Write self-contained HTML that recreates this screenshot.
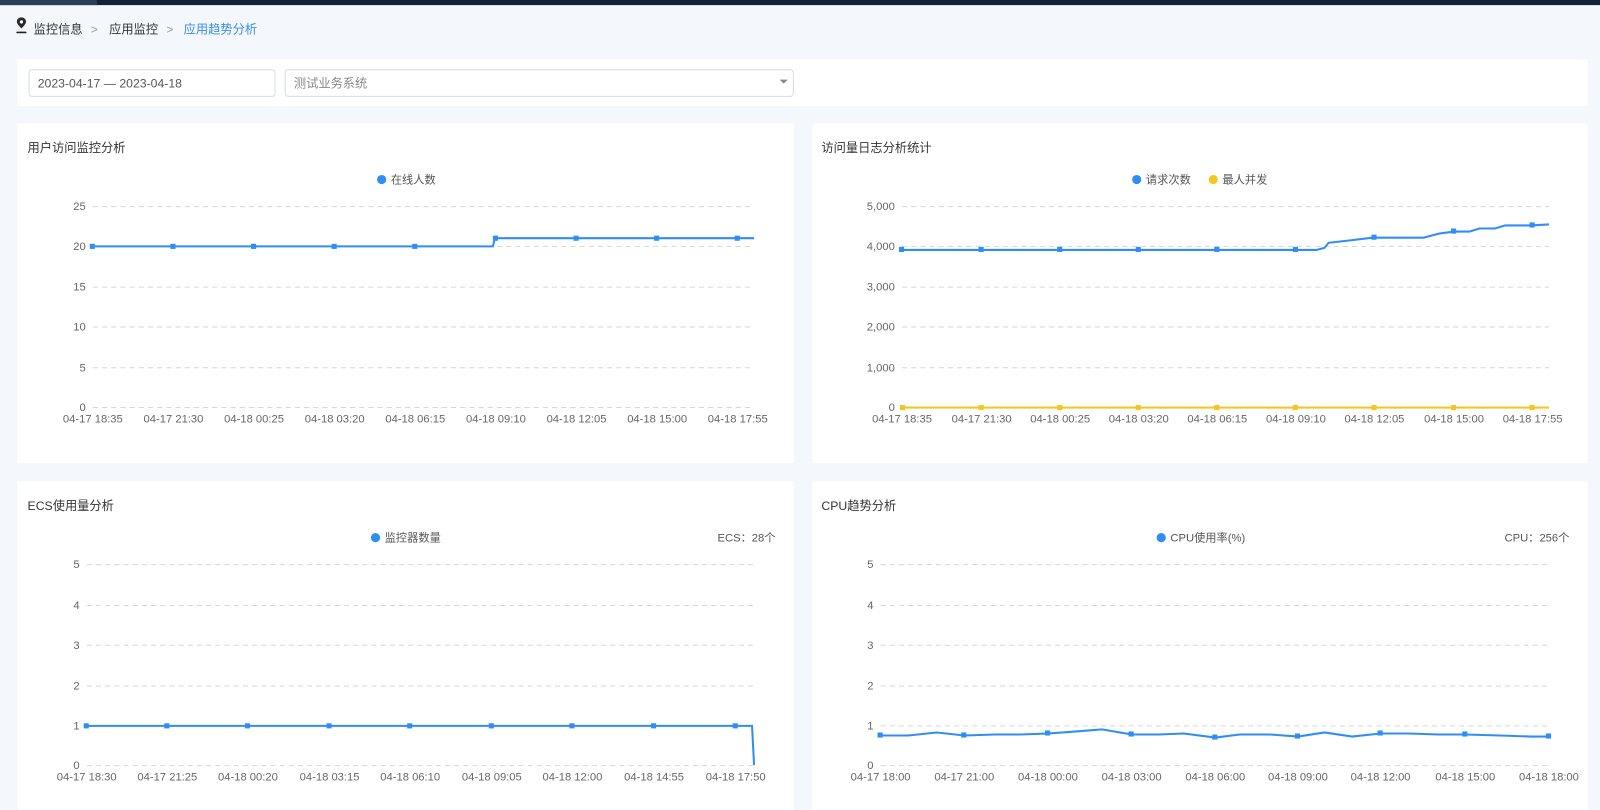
<!DOCTYPE html>
<html><head><meta charset="utf-8"><style>
html,body{margin:0;padding:0;width:1600px;height:810px;overflow:hidden;background:#f4f7fb;font-family:"Liberation Sans","Noto Sans CJK SC",sans-serif}
svg{display:block}
svg text{font-family:"Liberation Sans","Noto Sans CJK SC",sans-serif}
</style></head><body>
<svg width="1600" height="810" viewBox="0 0 1568 794" preserveAspectRatio="none" xmlns="http://www.w3.org/2000/svg">
<rect x="0" y="0" width="1568" height="794" fill="#f4f7fb"/>
<rect x="0" y="0" width="1568" height="5" fill="#13243a"/>
<rect x="0" y="0" width="95" height="5" fill="#2c3e55"/>
<g fill="#222">
<path d="M21 17c-2.8 0-4.5 2-4.5 4.3 0 2.6 4.5 6.5 4.5 6.5s4.5-3.9 4.5-6.5C25.5 19 23.8 17 21 17z" fill="#2a2a2a"/>
<circle cx="21" cy="21.5" r="1.6" fill="#fff"/>
<rect x="16" y="31" width="10" height="1.6" rx="0.8"/>
</g>
<text x="33" y="33" font-size="12" fill="#333">监控信息</text>
<text x="89" y="33" font-size="12" fill="#999">&gt;</text>
<text x="107" y="33" font-size="12" fill="#333">应用监控</text>
<text x="163" y="33" font-size="12" fill="#999">&gt;</text>
<text x="180" y="33" font-size="12" fill="#3a8ee6">应用趋势分析</text>
<rect x="17" y="58" width="1539" height="46" fill="#fff"/>
<rect x="28.5" y="68.5" width="241" height="26" rx="3" fill="#fff" stroke="#d5dbe0"/>
<text x="37" y="86" font-size="12" fill="#555">2023-04-17  —  2023-04-18</text>
<rect x="279.5" y="68.5" width="498" height="26" rx="3" fill="#fff" stroke="#d5dbe0"/>
<text x="288" y="86" font-size="12" fill="#888">测试业务系统</text>
<path d="M764 78l4 4 4-4z" fill="#888"/>
<rect x="17" y="121" width="761" height="333" fill="#fff"/>
<rect x="796" y="121" width="760" height="333" fill="#fff"/>
<rect x="17" y="472" width="761" height="330" fill="#fff"/>
<rect x="796" y="472" width="760" height="330" fill="#fff"/>
<g font-size="12" fill="#333">
<text x="27" y="149">用户访问监控分析</text>
<text x="805" y="149">访问量日志分析统计</text>
<text x="27" y="500">ECS使用量分析</text>
<text x="805" y="500">CPU趋势分析</text>
</g>
<g font-size="11" fill="#555">
<circle cx="374" cy="176" r="4.5" fill="#2f8ef5"/><text x="383" y="180">在线人数</text>
<circle cx="1114" cy="176" r="4.5" fill="#2f8ef5"/><text x="1123" y="180">请求次数</text>
<circle cx="1189" cy="176" r="4.5" fill="#f3c623"/><text x="1198" y="180">最人并发</text>
<circle cx="368" cy="527" r="4.5" fill="#2f8ef5"/><text x="377" y="531">监控器数量</text>
<circle cx="1138" cy="527" r="4.5" fill="#2f8ef5"/><text x="1147" y="531">CPU使用率(%)</text>
<text x="760" y="531" text-anchor="end">ECS：28个</text>
<text x="1538" y="531" text-anchor="end">CPU：256个</text>
</g>
<g stroke="#d6d6d6" stroke-dasharray="5 4" stroke-width="1">
<path d="M91 202.5H739M91 241.5H739M91 281.5H739M91 320.5H739M91 360.5H739M91 399.5H739"/>
<path d="M884 202.5H1518M884 241.5H1518M884 281.5H1518M884 320.5H1518M884 360.5H1518M884 399.5H1518"/>
<path d="M85 553.5H739M85 593.5H739M85 632.5H739M85 672.5H739M85 711.5H739M85 750.5H739"/>
<path d="M863 553.5H1518M863 593.5H1518M863 632.5H1518M863 672.5H1518M863 711.5H1518M863 750.5H1518"/>
</g>
<g font-size="11" fill="#666" text-anchor="end">
<text x="84" y="206">25</text><text x="84" y="245">20</text><text x="84" y="285">15</text><text x="84" y="324">10</text><text x="84" y="364">5</text><text x="84" y="403">0</text>
<text x="877" y="206">5,000</text><text x="877" y="245">4,000</text><text x="877" y="285">3,000</text><text x="877" y="324">2,000</text><text x="877" y="364">1,000</text><text x="877" y="403">0</text>
<text x="78" y="557">5</text><text x="78" y="597">4</text><text x="78" y="636">3</text><text x="78" y="676">2</text><text x="78" y="715">1</text><text x="78" y="754">0</text>
<text x="856" y="557">5</text><text x="856" y="597">4</text><text x="856" y="636">3</text><text x="856" y="676">2</text><text x="856" y="715">1</text><text x="856" y="754">0</text>
</g>
<g font-size="11" fill="#666" text-anchor="middle">
<text x="91" y="414">04-17 18:35</text><text x="170" y="414">04-17 21:30</text><text x="249" y="414">04-18 00:25</text><text x="328" y="414">04-18 03:20</text><text x="407" y="414">04-18 06:15</text><text x="486" y="414">04-18 09:10</text><text x="565" y="414">04-18 12:05</text><text x="644" y="414">04-18 15:00</text><text x="723" y="414">04-18 17:55</text>
<text x="884" y="414">04-17 18:35</text><text x="962" y="414">04-17 21:30</text><text x="1039" y="414">04-18 00:25</text><text x="1116" y="414">04-18 03:20</text><text x="1193" y="414">04-18 06:15</text><text x="1270" y="414">04-18 09:10</text><text x="1347" y="414">04-18 12:05</text><text x="1425" y="414">04-18 15:00</text><text x="1502" y="414">04-18 17:55</text>
<text x="85" y="765">04-17 18:30</text><text x="164" y="765">04-17 21:25</text><text x="243" y="765">04-18 00:20</text><text x="323" y="765">04-18 03:15</text><text x="402" y="765">04-18 06:10</text><text x="482" y="765">04-18 09:05</text><text x="561" y="765">04-18 12:00</text><text x="641" y="765">04-18 14:55</text><text x="721" y="765">04-18 17:50</text>
<text x="863" y="765">04-17 18:00</text><text x="945" y="765">04-17 21:00</text><text x="1027" y="765">04-18 00:00</text><text x="1109" y="765">04-18 03:00</text><text x="1191" y="765">04-18 06:00</text><text x="1272" y="765">04-18 09:00</text><text x="1353" y="765">04-18 12:00</text><text x="1436" y="765">04-18 15:00</text><text x="1518" y="765">04-18 18:00</text>
</g>
<g fill="none" stroke="#2f8ef5" stroke-width="2">
<path d="M91 241.5H483L485 233.5H739"/>
<path d="M884 245H1290L1298 243L1302 238L1320 236L1345 233H1395L1410 229L1425 227H1440L1450 224H1465L1475 221H1500L1518 220"/>
<path d="M85 711.5H737L739 750"/>
<path d="M863 721L890 721L918 718L945 721L975 720L1000 720L1027 719L1055 717L1080 715L1109 720L1135 720L1160 719L1191 723L1215 720L1245 720L1272 722L1298 718L1325 722L1353 719L1380 719L1410 720L1436 720L1470 721L1500 722L1518 722"/>
</g>
<path d="M884 399.5H1518" stroke="#f3c623" stroke-width="2"/>
<g fill="#2f8ef5">
<rect x="88" y="239" width="5" height="5"/><rect x="167" y="239" width="5" height="5"/><rect x="246" y="239" width="5" height="5"/><rect x="325" y="239" width="5" height="5"/><rect x="404" y="239" width="5" height="5"/><rect x="483" y="231" width="5" height="5"/><rect x="562" y="231" width="5" height="5"/><rect x="641" y="231" width="5" height="5"/><rect x="720" y="231" width="5" height="5"/>
<rect x="881" y="242" width="5" height="5"/><rect x="959" y="242" width="5" height="5"/><rect x="1036" y="242" width="5" height="5"/><rect x="1113" y="242" width="5" height="5"/><rect x="1190" y="242" width="5" height="5"/><rect x="1267" y="242" width="5" height="5"/><rect x="1344" y="230" width="5" height="5"/><rect x="1422" y="224" width="5" height="5"/><rect x="1499" y="218" width="5" height="5"/>
<rect x="82" y="709" width="5" height="5"/><rect x="161" y="709" width="5" height="5"/><rect x="240" y="709" width="5" height="5"/><rect x="320" y="709" width="5" height="5"/><rect x="399" y="709" width="5" height="5"/><rect x="479" y="709" width="5" height="5"/><rect x="558" y="709" width="5" height="5"/><rect x="638" y="709" width="5" height="5"/><rect x="718" y="709" width="5" height="5"/>
<rect x="860" y="718" width="5" height="5"/><rect x="942" y="718" width="5" height="5"/><rect x="1024" y="716" width="5" height="5"/><rect x="1106" y="717" width="5" height="5"/><rect x="1188" y="720" width="5" height="5"/><rect x="1269" y="719" width="5" height="5"/><rect x="1350" y="716" width="5" height="5"/><rect x="1433" y="717" width="5" height="5"/><rect x="1515" y="719" width="5" height="5"/>
</g>
<g fill="#f3c623">
<rect x="882" y="397" width="5" height="5"/><rect x="959" y="397" width="5" height="5"/><rect x="1036" y="397" width="5" height="5"/><rect x="1113" y="397" width="5" height="5"/><rect x="1190" y="397" width="5" height="5"/><rect x="1267" y="397" width="5" height="5"/><rect x="1344" y="397" width="5" height="5"/><rect x="1422" y="397" width="5" height="5"/><rect x="1499" y="397" width="5" height="5"/>
</g>
</svg>
</body></html>
